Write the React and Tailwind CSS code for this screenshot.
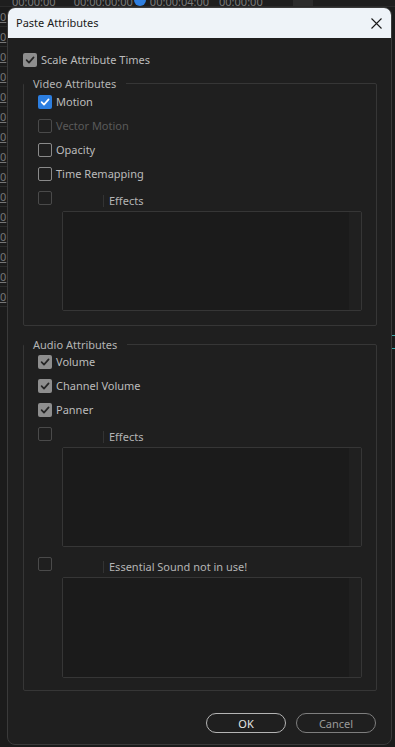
import React from "react";

const font = { fontFamily: '"Noto Sans", "Open Sans", sans-serif' };

function Check({ state }) {
  if (state === "gray" || state === "blue") {
    const bg = state === "blue" ? "bg-[#2c7ee0]" : "bg-[#8e8e8e]";
    const stroke = state === "blue" ? "#ffffff" : "#262626";
    return (
      <div className={`w-[14px] h-[14px] rounded-[2px] ${bg} flex items-center justify-center shrink-0`}>
        <svg width="10" height="10" viewBox="0 0 10 10">
          <path d="M1.6 5.2 L4 7.6 L8.6 2.4" fill="none" stroke={stroke} strokeWidth="1.7" strokeLinecap="round" strokeLinejoin="round" />
        </svg>
      </div>
    );
  }
  const border = state === "off" ? "border-[#8a8a8a]" : "border-[#4a4a4a]";
  return <div className={`w-[14px] h-[14px] rounded-[2px] border-[1.5px] ${border} shrink-0`} />;
}

function Row({ state, label, dim }) {
  return (
    <div className="h-6 flex items-center">
      <Check state={state} />
      <span className={`ml-[4px] text-[11px] leading-4 ${dim ? "text-[#5a5a5a]" : "text-[#bcbcbc]"}`}>{label}</span>
    </div>
  );
}

function SepRow({ label }) {
  return (
    <div className="h-6 flex items-center">
      <div className="w-[65px] flex items-center">
        <Check state="dis" />
      </div>
      <div className="flex items-center mt-[6px]">
        <div className="w-px h-3 bg-[#333333]" />
        <span className="ml-[5px] text-[11px] leading-4 text-[#b4b4b4]">{label}</span>
      </div>
    </div>
  );
}

function ListBox({ h }) {
  return (
    <div className={`ml-[24px] mt-[1px] ${h} border border-[#363636] rounded-[2px] flex`}>
      <div className="flex-1 bg-[#1b1b1b]" />
      <div className="w-[12px] bg-[#202020]" />
    </div>
  );
}

function Group({ title, children, className }) {
  return (
    <fieldset className={`border border-[#363636] rounded-[2px] pl-[14px] pr-[14px] ${className}`}>
      <legend className="-ml-[14px] pl-[9px] pr-[10px] text-[11px] leading-3 text-[#b4b4b4]">
        <span className="relative top-[1px]">{title}</span>
      </legend>
      {children}
    </fieldset>
  );
}

export default function App() {
  const leftRows = [48, 70, 90, 112, 133, 153, 173, 195, 226, 247, 302, 322, 360, 381, 402];
  return (
    <div className="w-[395px] h-[747px] bg-[#1b1b1b] relative overflow-hidden" style={font}>
      {/* background app behind dialog */}
      <div className="h-[7px] bg-[#1e1e1e] flex items-end overflow-hidden text-[11px] leading-none text-[#7a7a7a] border-b border-[#2a2a2a]">
        <span className="ml-[12px] -mb-[1px]">00:00:00</span>
        <span className="ml-[18px] -mb-[1px]">00:00:00:00</span>
        <span className="ml-[1px] w-[12px] h-[6px] rounded-b-full bg-[#2f7fe0]" />
        <span className="ml-[4px] -mb-[1px]">00:00:04:00</span>
        <span className="ml-[10px] -mb-[1px]">00:00:00</span>
        <span className="ml-[30px] w-[20px] h-[7px] bg-[#2c2c2c]" />
      </div>
      <div className="w-[7px] flex flex-col">
        {leftRows.map((y, i) => (
          <div key={i} className="h-[20px] border-b border-[#2a2a2a] text-[11px] leading-[20px] text-[#777] underline">0</div>
        ))}
      </div>
      <div className="absolute right-0 top-[335px] w-[3px] h-px bg-[#3aa6a6]" />
      <div className="absolute right-0 top-[348px] w-[3px] h-px bg-[#3aa6a6]" />

      {/* dialog */}
      <div className="absolute left-[7px] top-[7px] w-[385px] h-[738px] rounded-[8px] overflow-hidden bg-[#1f1f1f] border border-[#3a3a3a] flex flex-col">
        <div className="h-[30px] bg-[#eef3f8] flex items-center justify-between pl-[8px] pr-[9px] shrink-0">
          <span className="text-[11px] text-[#1a1a1a] leading-4">Paste Attributes</span>
          <svg width="11" height="11" viewBox="0 0 11 11">
            <path d="M0.5 0.5 L10.5 10.5 M10.5 0.5 L0.5 10.5" stroke="#1a1a1a" strokeWidth="1.1" />
          </svg>
        </div>
        <div className="flex-1 flex flex-col pt-[10px] pl-[15px] pr-[14px]">
          <Row state="gray" label="Scale Attribute Times" />
          <Group title="Video Attributes" className="mt-[5px] pt-[1px] pb-[14px]">
            <Row state="blue" label="Motion" />
            <Row state="dis" label="Vector Motion" dim />
            <Row state="off" label="Opacity" />
            <Row state="off" label="Time Remapping" />
            <SepRow label="Effects" />
            <ListBox h="h-[100px]" />
          </Group>
          <Group title="Audio Attributes" className="mt-[12px] pb-[12px]">
            <Row state="gray" label="Volume" />
            <Row state="gray" label="Channel Volume" />
            <Row state="gray" label="Panner" />
            <SepRow label="Effects" />
            <ListBox h="h-[100px]" />
            <div className="mt-[5px]">
              <SepRow label="Essential Sound not in use!" />
            </div>
            <ListBox h="h-[101px]" />
          </Group>
          <div className="mt-[22px] flex justify-end gap-[10px] pr-px">
            <button className="w-[80px] h-[20px] rounded-full border-[1.5px] border-[#b4b4b4] text-[11px] leading-none text-[#e6e6e6]">OK</button>
            <button className="w-[80px] h-[20px] rounded-full border-[1.5px] border-[#7e7e7e] text-[11px] leading-none text-[#9a9a9a]">Cancel</button>
          </div>
        </div>
      </div>
    </div>
  );
}
